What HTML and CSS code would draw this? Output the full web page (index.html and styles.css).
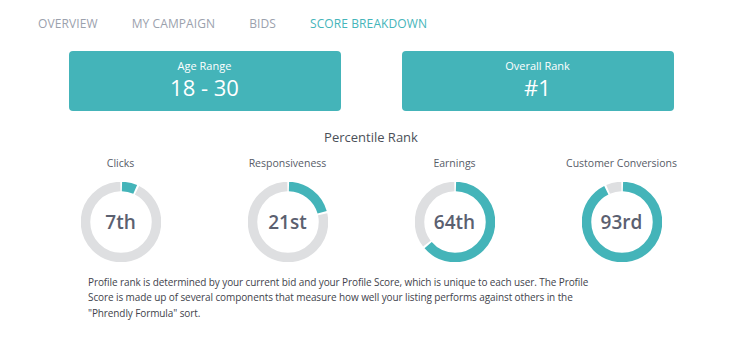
FILE: index.html
```html
<!DOCTYPE html>
<html>
<head>
<meta charset="utf-8">
<link rel="stylesheet" href="styles.css">
</head>
<body>
<div class="page">
  <nav class="tabs">
    <span class="tab">OVERVIEW</span>
    <span class="tab">MY CAMPAIGN</span>
    <span class="tab">BIDS</span>
    <span class="tab active">SCORE BREAKDOWN</span>
  </nav>
  <div class="cards">
    <div class="card">
      <div class="card-label">Age Range</div>
      <div class="card-value">18 - 30</div>
    </div>
    <div class="card">
      <div class="card-label">Overall Rank</div>
      <div class="card-value">#1</div>
    </div>
  </div>
  <h2 class="section-title">Percentile Rank</h2>
  <div class="ranks">
    <div class="rank">
      <div class="rank-label">Clicks</div>
      <div class="donut">
        <svg viewBox="0 0 80 80" width="80" height="80">
          <g transform="rotate(-90 40 40)">
            <circle class="track" cx="40" cy="40" r="35.5" stroke-dasharray="205.44 223.05" stroke-dashoffset="-16.61"/>
            <circle class="fill" cx="40" cy="40" r="35.5" stroke-dasharray="13.61 223.05" stroke-dashoffset="-1"/>
          </g>
        </svg>
        <span class="donut-value">7th</span>
      </div>
    </div>
    <div class="rank">
      <div class="rank-label">Responsiveness</div>
      <div class="donut">
        <svg viewBox="0 0 80 80" width="80" height="80">
          <g transform="rotate(-90 40 40)">
            <circle class="track" cx="40" cy="40" r="35.5" stroke-dasharray="174.21 223.05" stroke-dashoffset="-47.84"/>
            <circle class="fill" cx="40" cy="40" r="35.5" stroke-dasharray="44.84 223.05" stroke-dashoffset="-1"/>
          </g>
        </svg>
        <span class="donut-value">21st</span>
      </div>
    </div>
    <div class="rank">
      <div class="rank-label">Earnings</div>
      <div class="donut">
        <svg viewBox="0 0 80 80" width="80" height="80">
          <g transform="rotate(-90 40 40)">
            <circle class="track" cx="40" cy="40" r="35.5" stroke-dasharray="78.30 223.05" stroke-dashoffset="-143.75"/>
            <circle class="fill" cx="40" cy="40" r="35.5" stroke-dasharray="140.75 223.05" stroke-dashoffset="-1"/>
          </g>
        </svg>
        <span class="donut-value">64th</span>
      </div>
    </div>
    <div class="rank">
      <div class="rank-label">Customer Conversions</div>
      <div class="donut">
        <svg viewBox="0 0 80 80" width="80" height="80">
          <g transform="rotate(-90 40 40)">
            <circle class="track" cx="40" cy="40" r="35.5" stroke-dasharray="13.61 223.05" stroke-dashoffset="-208.44"/>
            <circle class="fill" cx="40" cy="40" r="35.5" stroke-dasharray="205.44 223.05" stroke-dashoffset="-1"/>
          </g>
        </svg>
        <span class="donut-value">93rd</span>
      </div>
    </div>
  </div>
  <p class="note">Profile rank is determined by your current bid and your Profile Score, which is unique to each user. The Profile Score is made up of several components that measure how well your listing performs against others in the "Phrendly Formula" sort.</p>
</div>
</body>
</html>
```
FILE: styles.css
```css
html, body {
  margin: 0;
  padding: 0;
  background: #ffffff;
}
body {
  font-family: "Open Sans", "Noto Sans", sans-serif;
  color: #3f434c;
}
.page {
  width: 742px;
  box-sizing: border-box;
  padding: 0 37px;
}
.tabs {
  display: flex;
  gap: 34px;
  padding-left: 1px;
  height: 46px;
  align-items: center;
}
.tab {
  font-size: 12px;
  font-weight: 500;
  color: #9ba1ad;
  letter-spacing: 0.1px;
}
.tab.active {
  color: #45b5ba;
}
.cards {
  display: flex;
  justify-content: center;
  gap: 61px;
  margin-top: 5px;
}
.card {
  width: 272px;
  height: 60px;
  box-sizing: border-box;
  background: #44b4b9;
  border-radius: 4px;
  color: #ffffff;
  text-align: center;
  padding-top: 7px;
}
.card-label {
  font-size: 11px;
  line-height: 15px;
}
.card-value {
  font-size: 22px;
  line-height: 28px;
  font-weight: 400;
}
.section-title {
  margin: 17px 0 0;
  text-align: center;
  font-size: 13px;
  line-height: 18px;
  font-weight: 400;
  color: #4b5059;
}
.ranks {
  display: grid;
  grid-template-columns: repeat(4, 167px);
  margin-top: 10px;
}
.rank {
  display: flex;
  flex-direction: column;
  align-items: center;
}
.rank-label {
  font-size: 10.5px;
  line-height: 14px;
  color: #575c67;
}
.donut {
  position: relative;
  width: 80px;
  height: 80px;
  margin-top: 12px;
}
.donut svg {
  display: block;
}
.donut circle {
  fill: none;
  stroke-width: 9.5;
}
.track {
  stroke: #dedfe1;
}
.fill {
  stroke: #44b4b9;
}
.donut-value {
  position: absolute;
  inset: 0;
  display: flex;
  align-items: center;
  justify-content: center;
  font-size: 19px;
  font-weight: 600;
  color: #5b6070;
}
.note {
  margin: 12.5px 0 0;
  padding-left: 51px;
  max-width: 510px;
  font-size: 10px;
  letter-spacing: -0.1px;
  line-height: 15.7px;
  color: #3f434c;
}
```
